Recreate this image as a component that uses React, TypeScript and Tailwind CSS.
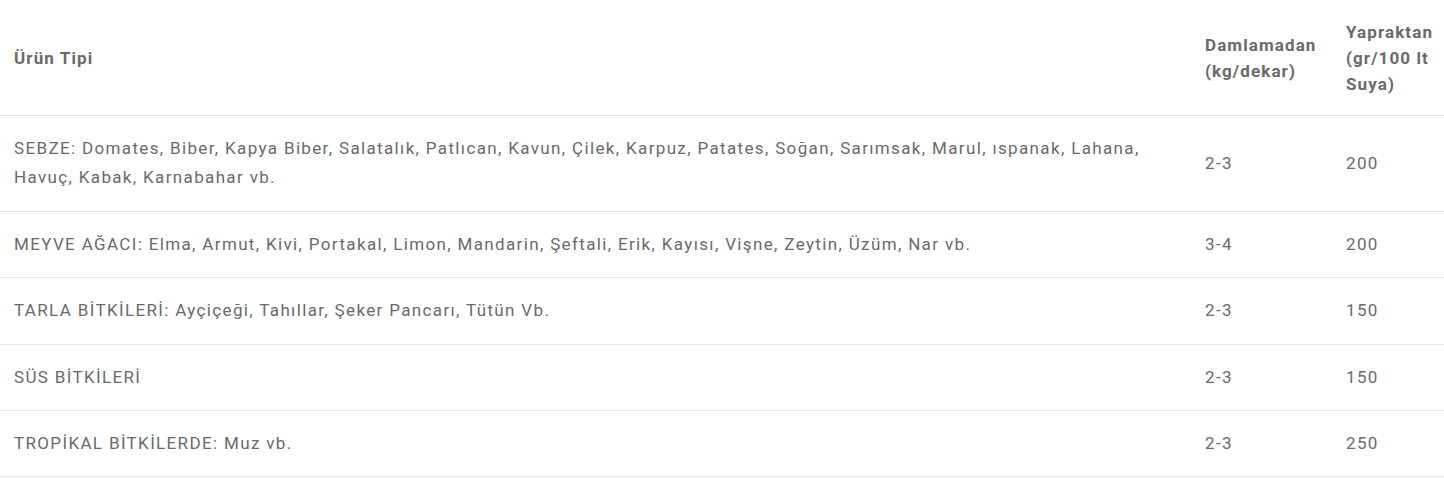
const rows = [
  {
    name: "SEBZE: Domates, Biber, Kapya Biber, Salatalık, Patlıcan, Kavun, Çilek, Karpuz, Patates, Soğan, Sarımsak, Marul, ıspanak, Lahana, Havuç, Kabak, Karnabahar vb.",
    drip: "2-3",
    leaf: "200",
  },
  {
    name: "MEYVE AĞACI: Elma, Armut, Kivi, Portakal, Limon, Mandarin, Şeftali, Erik, Kayısı, Vişne, Zeytin, Üzüm, Nar vb.",
    drip: "3-4",
    leaf: "200",
  },
  { name: "TARLA BİTKİLERİ: Ayçiçeği, Tahıllar, Şeker Pancarı, Tütün Vb.", drip: "2-3", leaf: "150" },
  { name: "SÜS BİTKİLERİ", drip: "2-3", leaf: "150" },
  { name: "TROPİKAL BİTKİLERDE: Muz vb.", drip: "2-3", leaf: "250" },
];

const th = "pt-[19px] pb-[18px] text-left align-middle font-bold leading-[26px] tracking-[1.1px]";
const td = "py-[18px] align-middle leading-[29.4px] tracking-[1.35px]";

export default function App() {
  return (
    <div className="w-[1444px] bg-white font-['Roboto',sans-serif] text-[17px] text-[#6a6a6a]">
      <table className="w-full table-fixed border-collapse">
        <colgroup>
          <col className="w-[1191px]" />
          <col className="w-[141px]" />
          <col className="w-[112px]" />
        </colgroup>
        <thead>
          <tr className="border-b border-[#e6e6e6]">
            <th className={`${th} px-[14px]`}>Ürün Tipi</th>
            <th className={`${th} pl-[14px] pr-2`}>Damlamadan (kg/dekar)</th>
            <th className={`${th} pl-[14px] pr-1`}>Yapraktan (gr/100 lt Suya)</th>
          </tr>
        </thead>
        <tbody>
          {rows.map((r) => (
            <tr key={r.name} className="border-b border-[#e6e6e6]">
              <td className={`${td} px-[14px]`}>{r.name}</td>
              <td className={`${td} px-[14px]`}>{r.drip}</td>
              <td className={`${td} px-[14px]`}>{r.leaf}</td>
            </tr>
          ))}
        </tbody>
      </table>
    </div>
  );
}
